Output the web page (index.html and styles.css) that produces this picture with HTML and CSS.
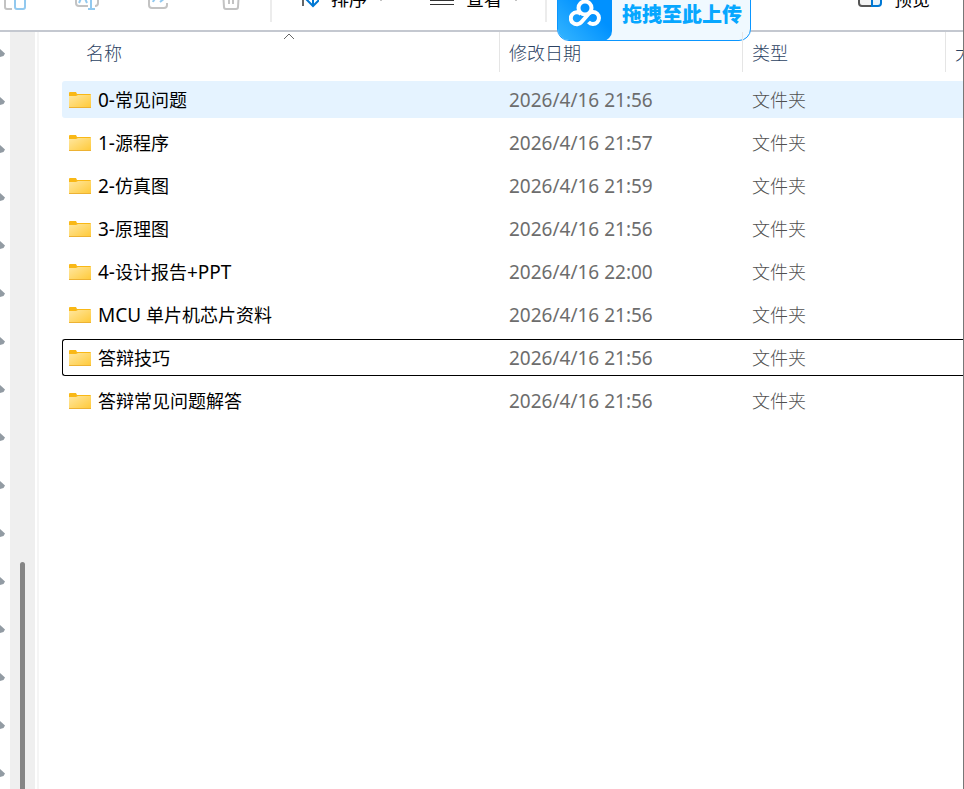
FILE: index.html
```
<!DOCTYPE html>
<html lang="zh-CN">
<head>
    <meta charset="UTF-8">
    <meta name="viewport" content="width=device-width, initial-scale=1.0">
    <title>文件夹</title>
    <link rel="stylesheet" href="styles.css">
</head>
<body>
    <!-- shared icons -->
    <svg class="defs" width="0" height="0" aria-hidden="true">
        <defs>
            <linearGradient id="folderFill" x1="0" y1="0" x2="1" y2="1">
                <stop offset="0" stop-color="#ffe7a0"/>
                <stop offset="1" stop-color="#ffc937"/>
            </linearGradient>
        </defs>
        <symbol id="folder" viewBox="0 0 22 18">
            <path d="M0 2q0-1 1-1h6l1 2h13q1 0 1 1v3H0z" fill="#f9b816"/>
            <path d="M0 5h7l2-1h13v12q0 1-1 1H1q-1 0-1-1z" fill="url(#folderFill)"/>
            <path d="M0 16.500h22" stroke="#edb233"/>
        </symbol>
        <symbol id="pin" viewBox="0 0 5 10">
            <path d="M0 1l5 4.500L3.500 8 0 9z" fill="#929ba3"/>
        </symbol>
    </svg>

    <header class="toolbar">
        <div class="toolbar-row">
            <div class="actions">
                <button aria-label="粘贴">
                    <svg width="24" height="24" viewBox="0 0 24 24"><path d="M9 22H4q-2 0-2-2V3" stroke="#c3c3c3"/><rect x="12" y="5" width="10" height="17" rx="2" stroke="#92c9ef"/></svg>
                </button>
                <button aria-label="重命名">
                    <svg width="24" height="24" viewBox="0 0 24 24"><path d="M13 19H4q-3 0-3-3V8q0-3 3-3h9M20 5q3 0 3 3v8q0 3-3 3" stroke="#c3c3c3"/><path d="M4 16l4-9 4 9M16 2v20M13 22h7" stroke="#92c9ef"/></svg>
                </button>
                <button aria-label="共享">
                    <svg width="24" height="24" viewBox="0 0 24 24"><path d="M9 3H5Q2 3 2 6v12q0 3 3 3h12q3 0 3-3v-2" stroke="#c3c3c3"/><path d="M6 15q1-3 4-4M13 15l5-4" stroke="#92c9ef"/></svg>
                </button>
                <button aria-label="删除">
                    <svg width="24" height="24" viewBox="0 0 24 24"><path d="M3 4h18M4 4l1 16q0 2 2 2h10q2 0 2-2l1-16M10 9v8M14 9v8" stroke="#c3c3c3"/></svg>
                </button>
            </div>
            <span class="divider"></span>
            <div class="menus">
                <button>
                    <svg width="24" height="24" viewBox="0 0 24 24"><path d="M8 19V4M4 8l4-4" stroke="#666"/><path d="M18 3v16M11 12l7 7 7-7" stroke="#0078d4"/></svg>
                    <span>排序</span>
                    <svg class="chevron" width="12" height="12" viewBox="0 0 12 12"><path d="M2 4l4 4 4-4" stroke="#c3c3c3"/></svg>
                </button>
                <button>
                    <svg class="lines" width="24" height="24" viewBox="0 0 24 24"><path d="M0 9.500h24M0 13.500h24M0 17.500h24" stroke="#333"/></svg>
                    <span>查看</span>
                    <svg class="chevron" width="12" height="12" viewBox="0 0 12 12"><path d="M2 4l4 4 4-4" stroke="#c3c3c3"/></svg>
                </button>
            </div>
            <span class="divider"></span>
            <button class="preview">
                <svg width="24" height="24" viewBox="0 0 24 24"><path d="M14 5H4Q1 5 1 8v8q0 3 3 3h10" stroke="#555" fill="#f3f3f3"/><path d="M14 5h6q3 0 3 3v8q0 3-3 3h-6z" stroke="#0078d4" fill="#e8f3fb"/></svg>
                <span>预览</span>
            </button>
        </div>
    </header>

    <button class="upload">
        <span class="upload-logo">
            <svg width="32" height="32" viewBox="0 0 32 32"><circle cx="16" cy="10" r="6.500"/><path d="M12 16a6 6 0 1 0 .5 8l7-8a6 6 0 1 1 0 8"/></svg>
        </span>
        <span class="upload-text">拖拽至此上传</span>
    </button>

    <div class="content">
        <nav class="tree" id="tree"></nav>
        <div class="scrollbar"><div class="thumb"></div></div>
        <main class="files">
            <svg class="sort-mark" width="12" height="7" viewBox="0 0 12 7"><path d="M1 6l5-5 5 5"/></svg>
            <table>
                <colgroup>
                    <col class="col-name"><col class="col-date"><col class="col-type"><col>
                </colgroup>
                <thead>
                    <tr>
                        <th><div>名称</div></th>
                        <th><div>修改日期</div></th>
                        <th><div>类型</div></th>
                        <th><div>大小</div></th>
                    </tr>
                </thead>
                <tbody>
                    <tr class="hover"><td><svg width="22" height="18"><use href="#folder"/></svg><span class="en">0-</span>常见问题</td><td class="en">2026/4/16 21:56</td><td>文件夹</td><td></td></tr>
                    <tr><td><svg width="22" height="18"><use href="#folder"/></svg><span class="en">1-</span>源程序</td><td class="en">2026/4/16 21:57</td><td>文件夹</td><td></td></tr>
                    <tr><td><svg width="22" height="18"><use href="#folder"/></svg><span class="en">2-</span>仿真图</td><td class="en">2026/4/16 21:59</td><td>文件夹</td><td></td></tr>
                    <tr><td><svg width="22" height="18"><use href="#folder"/></svg><span class="en">3-</span>原理图</td><td class="en">2026/4/16 21:56</td><td>文件夹</td><td></td></tr>
                    <tr><td><svg width="22" height="18"><use href="#folder"/></svg><span class="en">4-</span>设计报告<span class="en">+PPT</span></td><td class="en">2026/4/16 22:00</td><td>文件夹</td><td></td></tr>
                    <tr><td><svg width="22" height="18"><use href="#folder"/></svg><span class="en">MCU </span>单片机芯片资料</td><td class="en">2026/4/16 21:56</td><td>文件夹</td><td></td></tr>
                    <tr class="focused"><td><svg width="22" height="18"><use href="#folder"/></svg>答辩技巧</td><td class="en">2026/4/16 21:56</td><td>文件夹</td><td></td></tr>
                    <tr><td><svg width="22" height="18"><use href="#folder"/></svg>答辩常见问题解答</td><td class="en">2026/4/16 21:56</td><td>文件夹</td><td></td></tr>
                </tbody>
            </table>
        </main>
    </div>

    <script>
        // one pin per item of the navigation pane
        const tree = document.getElementById("tree");
        for (let i = 0; i < 16; i++) {
            tree.innerHTML += '<div class="pin"><svg width="5" height="10"><use href="#pin"/></svg></div>';
        }
    </script>
</body>
</html>
```
FILE: styles.css
```
* {
    box-sizing: border-box;
}
body {
    margin: 0;
    height: 100vh;
    display: flex;
    flex-direction: column;
    position: relative;
    overflow: hidden;
    background-color: white;
    border-right: 1px solid #777;
    font-family: "Noto Sans CJK SC", sans-serif;
    font-size: 18px;
    font-weight: 300;
    color: #000;
}
button {
    display: flex;
    align-items: center;
    padding: 0;
    border: none;
    background: none;
    font: inherit;
    color: #000;
    cursor: pointer;
}
.defs {
    position: absolute;
}

/* toolbar */
.toolbar {
    height: 32px;
    flex: none;
    overflow: hidden;
    border-bottom: 2px solid #c4c8d0;
}
.toolbar-row {
    display: flex;
    align-items: center;
    height: 62px;
    margin-top: -32px;
    padding: 0 33px 0 3px;
}
.toolbar svg {
    fill: none;
    stroke-width: 2;
}
.toolbar .chevron,
.toolbar .lines {
    stroke-width: 1;
}
.toolbar .chevron {
    margin-left: -4px;
}
.toolbar button span {
    line-height: 24px;
    padding-bottom: 2px;
    font-weight: 400;
}
.actions {
    display: flex;
    gap: 48px;
    margin-right: 4px;
}
.menus {
    display: flex;
    gap: 43px;
}
.menus button,
.preview {
    gap: 12px;
}
.preview {
    margin-left: auto;
}
.divider {
    width: 2px;
    height: 46px;
    margin: 0 23px;
    background-color: #ececec;
}

/* upload drop target */
.upload {
    position: absolute;
    top: -14px;
    left: 557px;
    height: 55px;
    width: 194px;
    overflow: hidden;
    border: 1px solid #0a96ff;
    border-radius: 12px;
    background-color: #f0f9ff;
}
.upload-logo {
    display: flex;
    align-items: center;
    justify-content: center;
    width: 54px;
    height: 54px;
    border-radius: 0 0 10px 0;
    background: linear-gradient(45deg, #36b6ff, #0091ff 60%);
}
.upload-logo svg {
    fill: none;
    stroke: white;
    stroke-width: 4;
}
.upload-text {
    margin-left: 10px;
    font-size: 20px;
    line-height: 24px;
    font-weight: 900;
    color: #06a7ff;
    white-space: nowrap;
}

/* content */
.content {
    display: flex;
    flex: 1;
    min-height: 0;
}
.tree {
    width: 10px;
    overflow: hidden;
}
.pin {
    display: flex;
    align-items: center;
    height: 48px;
}
.pin:first-child {
    margin-top: -3px;
}
.scrollbar {
    width: 25px;
    padding-top: 530px;
    background-color: #efefef;
}
.thumb {
    width: 5px;
    height: 100%;
    margin: 0 auto;
    border-radius: 3px 3px 0 0;
    background-color: #858585;
}
.files {
    flex: 1;
    min-width: 0;
    position: relative;
    overflow: hidden;
    margin-left: 2px;
    border-left: 2px solid #f5f5f5;
    padding-left: 23px;
}
.sort-mark {
    position: absolute;
    top: 1px;
    left: 244px;
    fill: none;
    stroke: #666;
}
table {
    width: 100%;
    margin-top: -6px;
    table-layout: fixed;
    border-collapse: separate;
    border-spacing: 0 6px;
}
.col-name {
    width: 438px;
}
.col-date {
    width: 243px;
}
.col-type {
    width: 203px;
}
th {
    height: 43px;
    padding: 0;
    vertical-align: top;
    text-align: left;
    font-weight: inherit;
    color: #2c4262;
}
th div {
    height: 40px;
    padding-left: 9px;
    line-height: 40px;
    white-space: nowrap;
    overflow: hidden;
    border-right: 1px solid #e5e5e5;
}
th:first-child div {
    padding-left: 24px;
}
th:last-child div {
    border-right: none;
}
td {
    height: 37px;
    padding: 0 0 0 9px;
    line-height: 35px;
    white-space: nowrap;
    color: #505050;
}
td:first-child {
    padding-left: 7px;
    font-weight: 400;
    color: #000;
    border-radius: 3px 0 0 3px;
}
td svg {
    margin-right: 7px;
    vertical-align: -2px;
}
.en {
    font-family: "Noto Sans", sans-serif;
    font-size: 19px;
    font-weight: 400;
}
td.en {
    padding-top: 2px;
    color: #6d6d6d;
}
.hover td {
    background-color: #e5f3ff;
}
.focused td {
    border-top: 1px solid #000;
    border-bottom: 1px solid #000;
}
.focused td.en {
    padding-top: 1px;
    line-height: 34px;
}
.focused td:first-child {
    padding-left: 6px;
    border-left: 1px solid #000;
}
```
